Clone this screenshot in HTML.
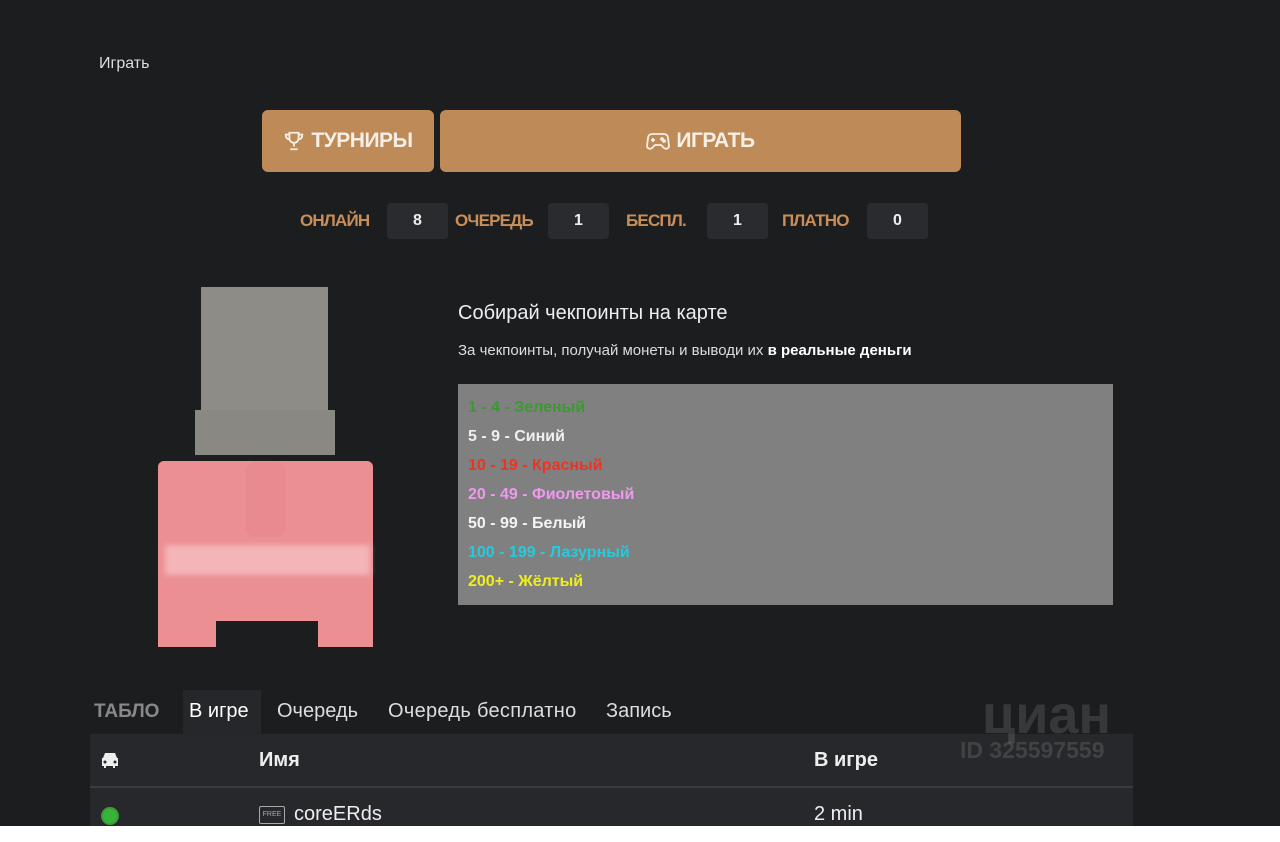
<!DOCTYPE html>
<html><head><meta charset="utf-8"><style>
*{margin:0;padding:0;box-sizing:border-box}
body{width:1280px;height:842px;background:#1c1d1f;font-family:"Liberation Sans","DejaVu Sans",sans-serif;position:relative;overflow:hidden;color:#fff}
.a{position:absolute}
.btn{background:#be8a58;border-radius:6px;color:#f6efe6;font-weight:bold;font-size:21px;display:flex;align-items:center;justify-content:center;gap:6px;letter-spacing:-0.5px}
.lbl{position:absolute;top:211px;color:#c98e58;font-weight:bold;font-size:17px;letter-spacing:-0.8px}
.num{position:absolute;top:203px;background:#2a2b2e;border-radius:4px;width:61px;height:36px;display:flex;align-items:center;justify-content:center;font-weight:bold;font-size:16px;color:#eee}
.list div{font-size:16px;font-weight:bold;height:29px}
.tab{position:absolute;top:700px;font-size:20px;color:#ddd}
</style></head><body>
<div class="a" style="left:99px;top:55px;font-size:16px;color:#ddd">Играть</div>
<div class="a btn" style="left:262px;top:110px;width:172px;height:62px">
<svg width="22" height="22" viewBox="0 0 24 24" fill="none" stroke="#f6efe6" stroke-width="2"><path d="M7 3h10v6a5 5 0 0 1-10 0z M7 5H3c0 4 2 5 4 5 M17 5h4c0 4-2 5-4 5 M12 14v4 M8 21h8"/></svg>ТУРНИРЫ</div>
<div class="a btn" style="left:440px;top:110px;width:521px;height:62px">
<svg width="24" height="20" viewBox="0 0 24 20" fill="none" stroke="#f6efe6" stroke-width="1.8"><path d="M6 3h12a4 4 0 0 1 4 4l1 8a3 3 0 0 1-5 2l-3-3H9l-3 3a3 3 0 0 1-5-2l1-8a4 4 0 0 1 4-4z"/><path d="M7 7v4M5 9h4"/><circle cx="16" cy="8" r="1"/><circle cx="18" cy="10" r="1"/></svg>ИГРАТЬ</div>
<span class="lbl" style="left:300px">ОНЛАЙН</span><span class="num" style="left:387px">8</span>
<span class="lbl" style="left:455px">ОЧЕРЕДЬ</span><span class="num" style="left:548px">1</span>
<span class="lbl" style="left:626px">БЕСПЛ.</span><span class="num" style="left:707px">1</span>
<span class="lbl" style="left:782px">ПЛАТНО</span><span class="num" style="left:867px">0</span>
<!-- robot -->
<div class="a" style="left:201px;top:287px;width:127px;height:165px;background:#8e8c86"></div>
<div class="a" style="left:195px;top:410px;width:140px;height:45px;background:#8a8882"></div>
<div class="a" style="left:158px;top:461px;width:215px;height:160px;background:#ec8f93;border-radius:6px"></div>
<div class="a" style="left:246px;top:462px;width:40px;height:75px;background:#e88a8e;border-radius:10px"></div>
<div class="a" style="left:165px;top:545px;width:205px;height:30px;background:#f4b5b8;filter:blur(3px)"></div>
<div class="a" style="left:158px;top:615px;width:58px;height:32px;background:#ec8f93"></div>
<div class="a" style="left:318px;top:615px;width:55px;height:32px;background:#ec8f93"></div>
<div class="a" style="left:458px;top:302px;font-size:20px;color:#eee">Собирай чекпоинты на карте</div>
<div class="a" style="left:458px;top:342px;font-size:15px;color:#ddd">За чекпоинты, получай монеты и выводи их <b style="color:#fff">в реальные деньги</b></div>
<div class="a list" style="left:458px;top:384px;width:655px;height:221px;background:#808080;padding:15px 0 0 10px">
<div style="color:#3a9a30">1 - 4 - Зеленый</div>
<div style="color:#f0f0f0">5 - 9 - Синий</div>
<div style="color:#ee3322">10 - 19 - Красный</div>
<div style="color:#ee99ee">20 - 49 - Фиолетовый</div>
<div style="color:#f4f4f4">50 - 99 - Белый</div>
<div style="color:#22ccdd">100 - 199 - Лазурный</div>
<div style="color:#eeee22">200+ - Жёлтый</div>
</div>
<div class="a" style="left:94px;top:701px;font-size:19px;font-weight:bold;color:#888">ТАБЛО</div>
<div class="a" style="left:183px;top:690px;width:78px;height:46px;background:#26272a"></div>
<div class="tab" style="left:189px;color:#fff">В игре</div>
<div class="tab" style="left:277px">Очередь</div>
<div class="tab" style="left:388px;letter-spacing:0.3px">Очередь бесплатно</div>
<div class="tab" style="left:606px">Запись</div>
<div class="a" style="left:90px;top:734px;width:1043px;height:92px;background:#27282b"></div>
<div class="a" style="left:90px;top:786px;width:1043px;height:2px;background:#3a3b3e"></div>
<svg class="a" style="left:99px;top:750px" width="22" height="20" viewBox="0 0 22 20"><path d="M4 8l2-5h10l2 5h1v8h-3v2h-2v-2H7v2H5v-2H3V8z" fill="#eee"/><circle cx="6" cy="12" r="1.5" fill="#27282b"/><circle cx="16" cy="12" r="1.5" fill="#27282b"/></svg>
<div class="a" style="left:259px;top:749px;font-size:20px;font-weight:bold;color:#eee">Имя</div>
<div class="a" style="left:814px;top:749px;font-size:20px;font-weight:bold;color:#eee">В игре</div>
<div class="a" style="left:101px;top:807px;width:18px;height:18px;border-radius:50%;border:2px solid #3c9a38;background:#38b33a"></div>
<div class="a" style="left:259px;top:806px;width:26px;height:18px;border:1.5px solid #aaa;border-radius:2px;font-size:7px;color:#aaa;text-align:center;line-height:15px">FREE</div>
<div class="a" style="left:294px;top:803px;font-size:20px;color:#eee">coreERds</div>
<div class="a" style="left:814px;top:803px;font-size:20px;color:#eee">2 min</div>
<div class="a" style="left:982px;top:684px;font-size:54px;font-weight:bold;color:rgba(255,255,255,0.12)">циан</div>
<div class="a" style="left:960px;top:737px;font-size:23px;font-weight:bold;color:rgba(255,255,255,0.12)">ID 325597559</div>
<div class="a" style="left:0;top:826px;width:1280px;height:16px;background:#fff"></div>
</body></html>
